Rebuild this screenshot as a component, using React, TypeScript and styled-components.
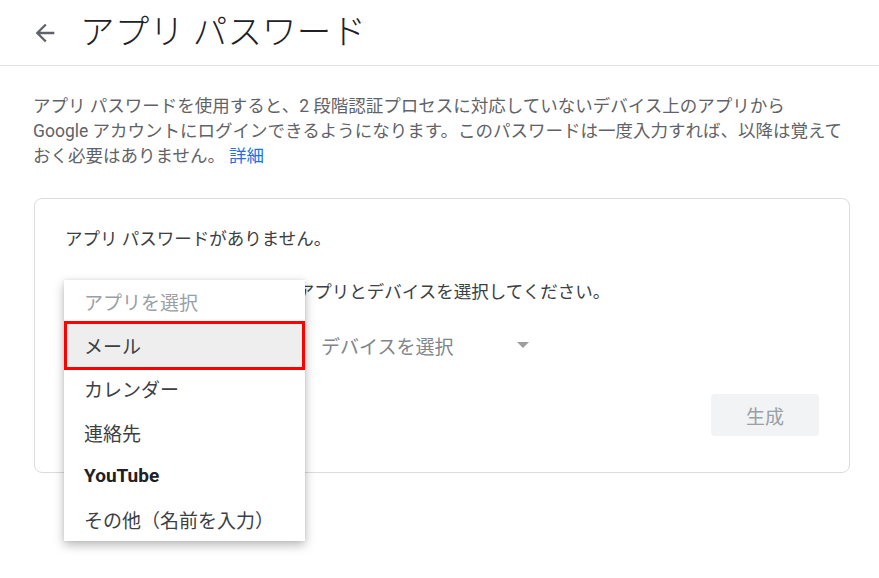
import React from 'react';
import styled, { createGlobalStyle } from 'styled-components';

const GlobalStyle = createGlobalStyle`
  html, body {
    margin: 0;
    padding: 0;
    background: #ffffff;
  }
  body {
    font-family: Roboto, "Noto Sans CJK JP", "Noto Sans", sans-serif;
    color: #3c4043;
  }
`;

const Page = styled.div`
  width: 879px;
  min-height: 578px;
  background: #ffffff;
`;

const Header = styled.header`
  display: flex;
  align-items: center;
  gap: 21px;
  height: 65px;
  padding-left: 31px;
  border-bottom: 1px solid #e0e0e0;
`;

const BackButton = styled.button`
  display: flex;
  align-items: center;
  justify-content: center;
  width: 28px;
  height: 28px;
  padding: 0;
  border: none;
  background: none;
  color: #5f6368;
  cursor: pointer;
`;

const Title = styled.h1`
  margin: 0;
  font-size: 34.5px;
  font-weight: 300;
  color: #202124;
  line-height: 1;
  letter-spacing: 0.2px;
`;

const Content = styled.main`
  padding: 28px 29px 40px 33px;
`;

const Description = styled.p`
  margin: 0;
  font-size: 17.5px;
  line-height: 25px;
  color: #5f6368;
  white-space: nowrap;
`;

const Link = styled.a`
  color: #1a73e8;
  text-decoration: none;
  margin-left: 4px;
`;

const Card = styled.section`
  position: relative;
  margin: 29px 0 0 1px;
  padding: 28px 30px 36px 30px;
  border: 1px solid #dadce0;
  border-radius: 8px;
`;

const CardText = styled.p<{ $gap?: number }>`
  margin: ${(p) => p.$gap ?? 0}px 0 0 0;
  font-size: 17.5px;
  line-height: 25px;
  color: #3c4043;
`;

const SelectRow = styled.div`
  display: flex;
  gap: 36px;
  margin-top: 20px;
`;

const Select = styled.div<{ $open?: boolean }>`
  display: flex;
  align-items: center;
  justify-content: space-between;
  width: 220px;
  height: 40px;
  padding-right: 12px;
  box-sizing: border-box;
  font-size: 19px;
  color: #80868b;
  visibility: ${(p) => (p.$open ? 'hidden' : 'visible')};
`;

const Caret = styled.span`
  width: 0;
  height: 0;
  border-left: 6px solid transparent;
  border-right: 6px solid transparent;
  border-top: 6px solid #9e9e9e;
`;

const Actions = styled.div`
  display: flex;
  justify-content: flex-end;
  margin-top: 29px;
`;

const GenerateButton = styled.button`
  width: 108px;
  height: 42px;
  border: none;
  border-radius: 4px;
  background: #f1f3f4;
  color: #9aa0a6;
  font-family: inherit;
  font-size: 19px;
`;

const Menu = styled.ul`
  position: absolute;
  left: 29px;
  top: 81px;
  width: 241px;
  margin: 0;
  padding: 0;
  list-style: none;
  background: #ffffff;
  box-shadow: 0 4px 10px rgba(0, 0, 0, 0.28), 0 0 3px rgba(0, 0, 0, 0.08);
`;

const MenuItem = styled.li<{ $placeholder?: boolean; $bold?: boolean; $selected?: boolean }>`
  display: flex;
  align-items: center;
  box-sizing: border-box;
  height: ${(p) => (p.$selected ? 49.5 : 43.5)}px;
  margin: ${(p) => (p.$selected ? '-3px 0' : '0')};
  padding-left: 20px;
  font-size: 19px;
  font-weight: ${(p) => (p.$bold ? 700 : 400)};
  color: ${(p) => (p.$placeholder ? '#9aa0a6' : p.$bold ? '#202124' : '#3c4043')};
  background: ${(p) => (p.$selected ? '#eeeeee' : 'transparent')};
  box-shadow: ${(p) => (p.$selected ? 'inset 0 0 0 3px #ff0000' : 'none')};
  position: relative;
`;

const BackArrow = () => (
  <svg width="28" height="28" viewBox="0 0 24 24" fill="currentColor">
    <path d="M20 11H7.83l5.59-5.59L12 4l-8 8 8 8 1.41-1.41L7.83 13H20v-2z" />
  </svg>
);

const apps = [
  { label: 'アプリを選択', placeholder: true },
  { label: 'メール', selected: true },
  { label: 'カレンダー' },
  { label: '連絡先' },
  { label: 'YouTube', bold: true },
  { label: 'その他（名前を入力）' },
];

const App: React.FC = () => {
  return (
    <Page>
      <GlobalStyle />
      <Header>
        <BackButton aria-label="戻る">
          <BackArrow />
        </BackButton>
        <Title>アプリ パスワード</Title>
      </Header>

      <Content>
        <Description>
          アプリ パスワードを使用すると、2 段階認証プロセスに対応していないデバイス上のアプリから
          <br />
          Google アカウントにログインできるようになります。このパスワードは一度入力すれば、以降は覚えて
          <br />
          おく必要はありません。
          <Link href="#">詳細</Link>
        </Description>

        <Card>
          <CardText>アプリ パスワードがありません。</CardText>
          <CardText $gap={28}>アプリ パスワードを生成するアプリとデバイスを選択してください。</CardText>

          <SelectRow>
            {/* app select is covered by its open list */}
            <Select $open>
              アプリを選択
              <Caret />
            </Select>
            <Select>
              デバイスを選択
              <Caret />
            </Select>
          </SelectRow>

          <Actions>
            <GenerateButton disabled>生成</GenerateButton>
          </Actions>

          <Menu>
            {apps.map((a) => (
              <MenuItem key={a.label} $placeholder={a.placeholder} $bold={a.bold} $selected={a.selected}>
                {a.label}
              </MenuItem>
            ))}
          </Menu>
        </Card>
      </Content>
    </Page>
  );
};

export default App;
